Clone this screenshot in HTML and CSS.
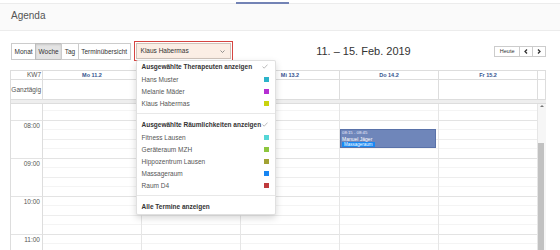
FILE: index.html
```html
<!DOCTYPE html>
<html lang="de">
<head>
<meta charset="utf-8">
<title>Agenda</title>
<link rel="stylesheet" href="styles.css">
</head>
<body>
<div class="tabline"><span class="tab-active"></span></div>
<header class="page-header"><h1>Agenda</h1></header>
<main class="content">
  <div class="toolbar">
    <div class="tb-left">
      <div class="btn-group">
        <button class="btn">Monat</button><button class="btn active">Woche</button><button class="btn">Tag</button><button class="btn">Terminübersicht</button>
      </div>
      <div class="filter">
        <div class="select">Klaus Habermas<svg class="caret" width="5" height="3" viewBox="0 0 5 3"><polyline points="0.5,0.5 2.5,2.5 4.5,0.5" fill="none" stroke="#777" stroke-width="0.8"/></svg></div>
        <div class="menu">
          <div class="dd-header"><span>Ausgewählte Therapeuten anzeigen</span><svg class="check" width="6" height="5" viewBox="0 0 6 5"><polyline points="0.5,2.6 2.2,4.2 5.5,0.6" fill="none" stroke="#aaa" stroke-width="0.8"/></svg></div>
          <div class="dd-item"><span>Hans Muster</span><i class="sw" style="background:#2bb3c9"></i></div>
          <div class="dd-item"><span>Melanie Mäder</span><i class="sw" style="background:#b52fd3"></i></div>
          <div class="dd-item"><span>Klaus Habermas</span><i class="sw" style="background:#c9d30d"></i></div>
          <div class="dd-divider"></div>
          <div class="dd-header"><span>Ausgewählte Räumlichkeiten anzeigen</span><svg class="check" width="6" height="5" viewBox="0 0 6 5"><polyline points="0.5,2.6 2.2,4.2 5.5,0.6" fill="none" stroke="#aaa" stroke-width="0.8"/></svg></div>
          <div class="dd-item"><span>Fitness Lausen</span><i class="sw" style="background:#55d6d6"></i></div>
          <div class="dd-item"><span>Geräteraum MZH</span><i class="sw" style="background:#8dc63e"></i></div>
          <div class="dd-item"><span>Hippozentrum Lausen</span><i class="sw" style="background:#a2a233"></i></div>
          <div class="dd-item"><span>Massageraum</span><i class="sw" style="background:#1785f2"></i></div>
          <div class="dd-item"><span>Raum D4</span><i class="sw" style="background:#bf3a3c"></i></div>
          <div class="dd-divider"></div>
          <div class="dd-header"><span>Alle Termine anzeigen</span></div>
        </div>
      </div>
    </div>
    <h2 class="title">11. – 15. Feb. 2019</h2>
    <div class="tb-right">
      <div class="btn-group small">
        <button class="btn">Heute</button><button class="btn arrow"><svg width="4" height="5" viewBox="0 0 4 5"><polyline points="3,0.5 1,2.5 3,4.5" fill="none" stroke="#333" stroke-width="1.3"/></svg></button><button class="btn arrow"><svg width="4" height="5" viewBox="0 0 4 5"><polyline points="1,0.5 3,2.5 1,4.5" fill="none" stroke="#333" stroke-width="1.3"/></svg></button>
      </div>
    </div>
  </div>

  <div class="cal">
    <div class="cal-row cal-head">
      <div class="cell axis">KW7</div>
      <div class="cell day">Mo 11.2</div>
      <div class="cell day">Di 12.2</div>
      <div class="cell day">Mi 13.2</div>
      <div class="cell day">Do 14.2</div>
      <div class="cell day">Fr 15.2</div>
      <div class="cell gutter"></div>
    </div>
    <div class="cal-row cal-allday">
      <div class="cell axis">Ganztägig</div>
      <div class="cell"></div>
      <div class="cell"></div>
      <div class="cell"></div>
      <div class="cell"></div>
      <div class="cell"></div>
      <div class="cell gutter"></div>
    </div>
    <div class="cal-divider"></div>
    <div class="cal-body">
      <div class="scroller">
        <div class="inner">
          <div class="slot half"><div class="ax"></div><div class="lane"></div></div>
          <div class="slot"><div class="ax"></div><div class="lane"></div></div>
          <div class="slot hour"><div class="ax"><span>08:00</span></div><div class="lane"></div></div>
          <div class="slot"><div class="ax"></div><div class="lane"></div></div>
          <div class="slot half"><div class="ax"></div><div class="lane"></div></div>
          <div class="slot"><div class="ax"></div><div class="lane"></div></div>
          <div class="slot hour"><div class="ax"><span>09:00</span></div><div class="lane"></div></div>
          <div class="slot"><div class="ax"></div><div class="lane"></div></div>
          <div class="slot half"><div class="ax"></div><div class="lane"></div></div>
          <div class="slot"><div class="ax"></div><div class="lane"></div></div>
          <div class="slot hour"><div class="ax"><span>10:00</span></div><div class="lane"></div></div>
          <div class="slot"><div class="ax"></div><div class="lane"></div></div>
          <div class="slot half"><div class="ax"></div><div class="lane"></div></div>
          <div class="slot"><div class="ax"></div><div class="lane"></div></div>
          <div class="slot hour"><div class="ax"><span>11:00</span></div><div class="lane"></div></div>
          <div class="slot"><div class="ax"></div><div class="lane"></div></div>
          <div class="slot half"><div class="ax"></div><div class="lane"></div></div>
          <div class="slot"><div class="ax"></div><div class="lane"></div></div>

          <div class="day-cols">
            <div class="col"></div>
            <div class="col"></div>
            <div class="col"></div>
            <div class="col">
              <div class="event">
                <div class="ev-time">08:15 - 08:45</div>
                <div class="ev-title">Manuel Jäger</div>
                <div class="ev-tag">Massageraum</div>
              </div>
            </div>
            <div class="col"></div>
          </div>
        </div>
      </div>
      <div class="scrollbar"><span class="sb-up"></span><span class="sb-thumb"></span></div>
    </div>
  </div>
</main>
</body>
</html>
```

FILE: styles.css
```css
* { box-sizing: border-box; }

html, body {
  margin: 0;
  width: 560px;
  height: 250px;
  overflow: hidden;
}

body {
  font-family: "Liberation Sans", Arial, sans-serif;
  color: #333;
  background: #fff;
}

.tabline {
  height: 4px;
  border-bottom: 1px solid #ececec;
  display: flex;
  align-items: flex-end;
}

.tab-active {
  margin-left: 236px;
  width: 53px;
  height: 2px;
  margin-bottom: -1px;
  background: #7383b5;
}

.page-header {
  height: 27px;
  background: #fafafa;
  border-bottom: 1px solid #ececec;
  padding-left: 11px;
}

.page-header h1 {
  margin: 0;
  font-size: 10px;
  font-weight: normal;
  line-height: 24px;
  color: #555;
}

.content {
  padding: 10px 14px 0 10px;
}

.toolbar {
  display: flex;
  align-items: center;
  height: 20px;
  padding-left: 1px;
}

.tb-left {
  display: flex;
  align-items: center;
  gap: 3px;
}

.btn-group {
  display: flex;
}

.btn {
  font-family: inherit;
  font-size: 6.5px;
  color: #333;
  height: 17px;
  padding: 0 2.5px;
  margin: 0;
  background: #fff;
  border: 1px solid #ccc;
  border-radius: 0;
}

.btn + .btn {
  margin-left: -1px;
}

.btn.active {
  background: #e4e4e4;
  border-color: #bdbdbd;
  box-shadow: inset 0 1px 2px rgba(0,0,0,0.12);
}

.filter {
  position: relative;
  border: 1px solid #d64541;
  padding: 1px;
}

.select {
  width: 95px;
  height: 16px;
  background: #fbeee5;
  border: 1px solid #cfc3ba;
  font-size: 6.5px;
  line-height: 14px;
  padding-left: 4px;
  padding-right: 5px;
  display: flex;
  justify-content: space-between;
  align-items: center;
  color: #333;
}

.menu {
  position: absolute;
  left: 1px;
  top: 18px;
  width: 140px;
  background: #fff;
  border: 1px solid rgba(0,0,0,0.12);
  border-radius: 2px;
  box-shadow: 0 3px 7px rgba(0,0,0,0.16);
  padding-bottom: 1px;
  z-index: 5;
}

.dd-header, .dd-item {
  display: flex;
  justify-content: space-between;
  align-items: center;
  padding: 0 6px 0 5px;
  font-size: 6.5px;
}

.dd-header {
  height: 12px;
  line-height: 11px;
  align-items: flex-start;
  font-weight: bold;
  color: #333;
}

.dd-header .check {
  margin-top: 3px;
  margin-right: 1px;
}

.dd-item {
  height: 12px;
  color: #555;
}

.sw {
  width: 5px;
  height: 5px;
  display: block;
}

.dd-divider {
  height: 1px;
  background: #e8e8e8;
  margin: 4px 0 5px;
}

.title {
  flex: 1;
  margin: 0;
  text-align: center;
  font-size: 11px;
  font-weight: normal;
  color: #333;
}

.btn-group.small .btn {
  height: 11px;
  font-size: 5.5px;
  padding: 0 4.5px;
  line-height: 9px;
}

.btn-group.small .btn.arrow {
  width: 14px;
  padding: 0;
  display: flex;
  align-items: center;
  justify-content: center;
}

.cal {
  margin-top: 9px;
  width: 536px;
  border-top: 1px solid #ddd;
  border-left: 1px solid #ddd;
}

.cal-row {
  display: grid;
  grid-template-columns: 32px repeat(5, 99px) 8px;
}

.cell {
  border-right: 1px solid #ddd;
  border-bottom: 1px solid #ddd;
}

.cal-head .cell {
  height: 9px;
  line-height: 8px;
}

.cal-head .axis {
  font-size: 6.5px;
  text-align: right;
  padding-right: 1px;
  color: #555;
}

.cal-head .day {
  text-align: center;
  font-size: 5.5px;
  font-weight: bold;
  color: #34528e;
}

.cal-allday .cell {
  height: 20px;
}

.cal-allday .axis {
  font-size: 6.5px;
  line-height: 19px;
  text-align: right;
  padding-right: 1px;
  color: #555;
}

.cal-divider {
  height: 4px;
  background: #eee;
  border-bottom: 1px solid #ddd;
}

.cal-body {
  display: flex;
  height: 150px;
}

.scroller {
  width: 527px;
  height: 150px;
  overflow: hidden;
  position: relative;
}

.inner {
  position: relative;
  margin-top: -3.5px;
}

.slot {
  display: flex;
  height: 9.5px;
}

.slot .ax {
  width: 32px;
  border-right: 1px solid #ddd;
}

.slot .lane {
  flex: 1;
  border-top: 1px solid #f4f4f4;
}

.slot.half .lane {
  border-top-color: #ededed;
}

.slot.hour .ax,
.slot.hour .lane {
  border-top: 1px solid #e3e3e3;
}

.slot .ax span {
  display: block;
  text-align: right;
  padding-right: 2px;
  padding-top: 1px;
  font-size: 6.5px;
  line-height: 8px;
  color: #555;
}

.day-cols {
  position: absolute;
  top: 0;
  bottom: 0;
  left: 32px;
  display: grid;
  grid-template-columns: repeat(5, 99px);
}

.col {
  position: relative;
  border-right: 1px solid #e6e6e6;
}

.event {
  position: absolute;
  top: 28.5px;
  left: 0;
  width: 96px;
  height: 19px;
  background: #6f86ba;
  border: 1px solid #5a72a9;
  color: #fff;
  padding-left: 1px;
  overflow: hidden;
  font-size: 5px;
  line-height: 5px;
}

.ev-time {
  font-size: 4.3px;
  line-height: 6px;
  color: #eef;
}

.ev-title {
  font-size: 5px;
  line-height: 6px;
}

.ev-tag {
  display: block;
  width: fit-content;
  background: #1789f4;
  font-size: 4.5px;
  line-height: 5px;
  padding: 0 2px;
}

.scrollbar {
  width: 8px;
  background: #f6f6f6;
  display: flex;
  flex-direction: column;
  align-items: flex-start;
}

.sb-up {
  margin: 1px 0 0 2px;
  width: 0;
  height: 0;
  border-left: 2px solid transparent;
  border-right: 2px solid transparent;
  border-bottom: 2px solid #777;
}

.sb-thumb {
  margin-top: 36px;
  width: 6px;
  height: 120px;
  background: #c1c1c1;
}
```
